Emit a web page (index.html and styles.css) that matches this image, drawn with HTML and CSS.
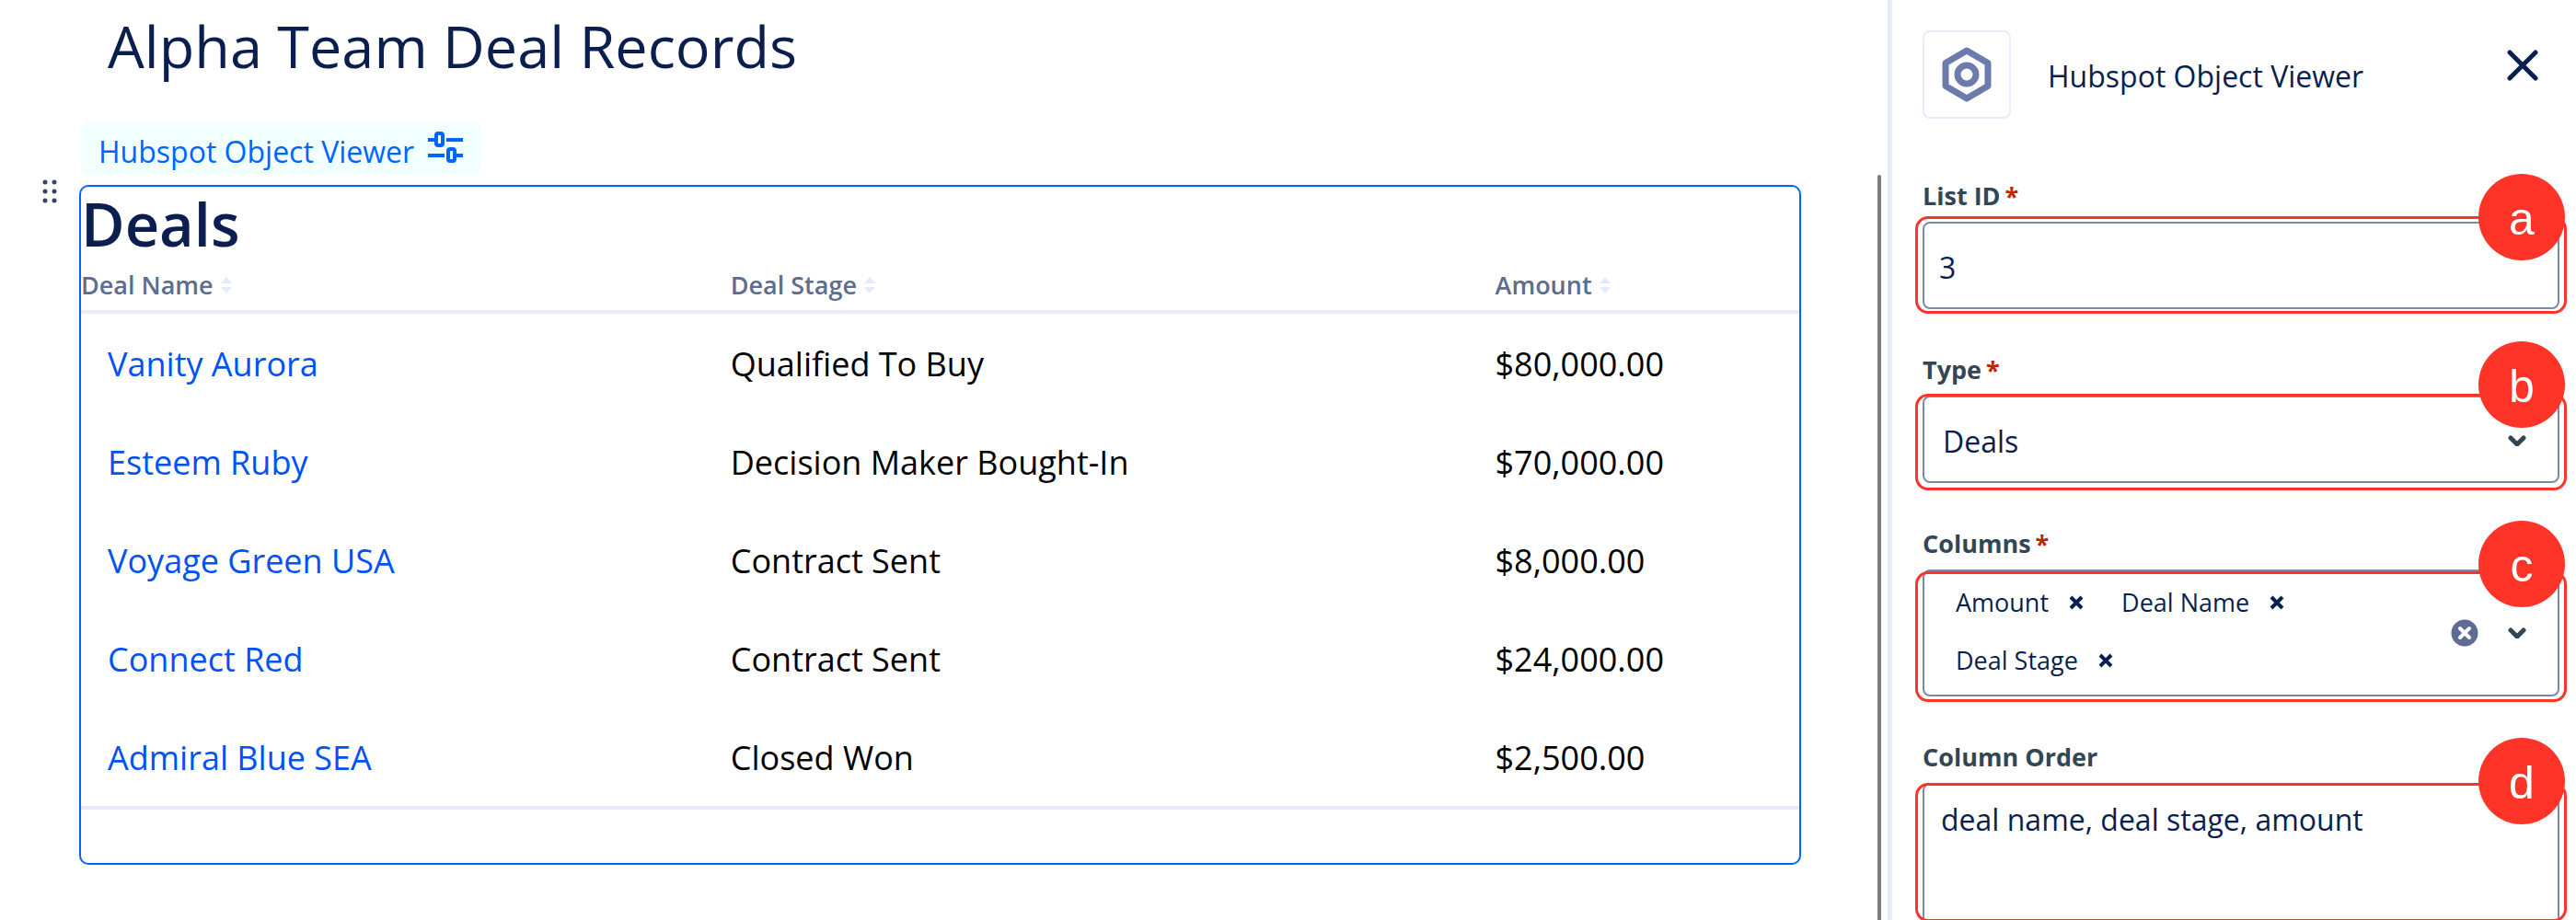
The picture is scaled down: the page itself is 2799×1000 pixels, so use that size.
FILE: index.html
```
<!DOCTYPE html>
<html lang="en">
<head>
  <meta charset="utf-8">
  <meta name="viewport" content="width=device-width, initial-scale=1">
  <title>Alpha Team Deal Records</title>
  <link rel="stylesheet" href="styles.css">
</head>
<body>
  <div class="app">
    <main class="editor">
      <h1 class="page-title">Alpha Team Deal Records</h1>

      <button class="macro-tag" type="button">
        <span>Hubspot Object Viewer</span>
        <svg class="tag-icon" viewBox="0 0 38 34" fill="none" stroke="currentColor" stroke-width="4" aria-hidden="true">
          <path d="M0 9h8M20 9h18M0 26h18M30 26h8"/>
          <rect x="9" y="2" width="7" height="13" rx="2"/>
          <rect x="22" y="19" width="7" height="13" rx="2"/>
        </svg>
      </button>

      <section class="macro">
        <svg class="drag-handle" viewBox="0 0 16 26" fill="currentColor" aria-hidden="true">
          <circle cx="3" cy="3" r="2.5"/><circle cx="13" cy="3" r="2.5"/>
          <circle cx="3" cy="13" r="2.5"/><circle cx="13" cy="13" r="2.5"/>
          <circle cx="3" cy="23" r="2.5"/><circle cx="13" cy="23" r="2.5"/>
        </svg>
        <h2 class="macro-title">Deals</h2>
        <table class="deals">
          <colgroup><col class="col-name"><col class="col-stage"><col></colgroup>
          <thead>
            <tr>
              <th scope="col"><button class="sort" type="button">Deal Name <svg class="sort-icon" viewBox="0 0 12 18" aria-hidden="true"><path d="M6 0l6 7H0zM6 18l6-7H0z"/></svg></button></th>
              <th scope="col"><button class="sort" type="button">Deal Stage <svg class="sort-icon" viewBox="0 0 12 18" aria-hidden="true"><path d="M6 0l6 7H0zM6 18l6-7H0z"/></svg></button></th>
              <th scope="col"><button class="sort" type="button">Amount <svg class="sort-icon" viewBox="0 0 12 18" aria-hidden="true"><path d="M6 0l6 7H0zM6 18l6-7H0z"/></svg></button></th>
            </tr>
          </thead>
          <tbody>
            <tr><td><a href="#">Vanity Aurora</a></td><td>Qualified To Buy</td><td>$80,000.00</td></tr>
            <tr><td><a href="#">Esteem Ruby</a></td><td>Decision Maker Bought-In</td><td>$70,000.00</td></tr>
            <tr><td><a href="#">Voyage Green USA</a></td><td>Contract Sent</td><td>$8,000.00</td></tr>
            <tr><td><a href="#">Connect Red</a></td><td>Contract Sent</td><td>$24,000.00</td></tr>
            <tr><td><a href="#">Admiral Blue SEA</a></td><td>Closed Won</td><td>$2,500.00</td></tr>
          </tbody>
        </table>
      </section>
      <div class="scroll-thumb"></div>
    </main>

    <aside class="panel">
      <header class="panel-header">
        <span class="app-icon">
          <svg viewBox="0 0 54 60" fill="none" stroke="currentColor" stroke-width="7" stroke-linejoin="round" aria-hidden="true">
            <path d="M27 4L50 17.500V42.500L27 56L4 42.500V17.500z"/>
            <circle cx="27" cy="30" r="10"/>
          </svg>
        </span>
        <span class="panel-title">Hubspot Object Viewer</span>
        <button class="close" type="button" aria-label="Close">
          <svg viewBox="0 0 34 34" fill="none" stroke="currentColor" stroke-width="5" stroke-linecap="round" aria-hidden="true"><path d="M3 3l28 28M31 3L3 31"/></svg>
        </button>
      </header>

      <form class="fields">
        <div class="field">
          <label for="list-id">List ID<span class="required">*</span></label>
          <div class="control">
            <input class="box" id="list-id" type="text" value="3">
            <span class="callout callout-a"></span><span class="badge badge-a">a</span>
          </div>
        </div>

        <div class="field">
          <label for="type">Type<span class="required">*</span></label>
          <div class="control">
            <select class="box" id="type"><option>Deals</option></select>
            <svg class="chevron chevron-over" viewBox="0 0 20 12" aria-hidden="true"><path d="M3 3l7 7 7-7"/></svg>
            <span class="callout callout-b"></span><span class="badge badge-b">b</span>
          </div>
        </div>

        <div class="field">
          <label for="columns">Columns<span class="required">*</span></label>
          <div class="control">
            <div class="box multi">
              <div class="chips">
                <span class="chip">Amount <button type="button" aria-label="Remove Amount"><svg viewBox="0 0 16 16" aria-hidden="true"><path d="M2 2l12 12M14 2L2 14"/></svg></button></span>
                <span class="chip">Deal Name <button type="button" aria-label="Remove Deal Name"><svg viewBox="0 0 16 16" aria-hidden="true"><path d="M2 2l12 12M14 2L2 14"/></svg></button></span>
                <span class="chip">Deal Stage <button type="button" aria-label="Remove Deal Stage"><svg viewBox="0 0 16 16" aria-hidden="true"><path d="M2 2l12 12M14 2L2 14"/></svg></button></span>
                <input class="chip-input" id="columns" type="text">
              </div>
              <button class="clear" type="button" aria-label="Clear all">
                <svg viewBox="0 0 30 30" aria-hidden="true"><circle cx="15" cy="15" r="14.500" fill="#5e6c94"/><path d="M10 10l10 10M20 10L10 20" stroke="#fff" stroke-width="4" stroke-linecap="round"/></svg>
              </button>
              <svg class="chevron" viewBox="0 0 20 12" aria-hidden="true"><path d="M3 3l7 7 7-7"/></svg>
            </div>
            <span class="callout callout-c"></span><span class="badge badge-c">c</span>
          </div>
        </div>

        <div class="field">
          <label for="order">Column Order</label>
          <div class="control">
            <textarea class="box" id="order">deal name, deal stage, amount</textarea>
            <span class="callout callout-d"></span><span class="badge badge-d">d</span>
          </div>
        </div>
      </form>
    </aside>
  </div>
</body>
</html>
```
FILE: styles.css
```
:root {
  --ink: #0a1f50;
  --blue: #0065ff;
  --line: #e8ebfb;
  --red: #ff3429;
}

* { box-sizing: border-box; }

body {
  margin: 0;
  background: #fff;
  color: var(--ink);
  font-family: "Open Sans", "Noto Sans", sans-serif;
  font-size: 32px;
}

button, input, select, textarea {
  margin: 0;
  border: 0;
  padding: 0;
  background: none;
  color: inherit;
  font: inherit;
}

svg { display: block; flex: none; }

.app {
  display: flex;
  height: 100vh;
  overflow: hidden;
}

/* Editor */
.editor {
  position: relative;
  flex: 1;
  min-width: 0;
  padding: 10px 94px 0 86px;
}

.page-title {
  margin: 0 0 44px;
  padding-left: 31px;
  font-size: 63px;
  font-weight: 400;
  line-height: 80px;
}

.macro-tag {
  display: flex;
  gap: 15px;
  margin: 0 0 11px 2px;
  border-radius: 8px;
  padding: 6px 20px 0 19px;
  background: #f2ffff;
  color: var(--blue);
  line-height: 50px;
}

.tag-icon {
  width: 38px;
  height: 34px;
  margin-top: 3px;
}

.macro {
  position: relative;
  border: 2px solid var(--blue);
  border-radius: 10px;
  padding-bottom: 58px;
}

.drag-handle {
  position: absolute;
  top: -8px;
  left: -42px;
  width: 16px;
  height: 26px;
  color: #344563;
}

.macro-title {
  margin: 0;
  font-size: 65px;
  font-weight: 600;
  line-height: 80px;
}

.deals {
  width: 100%;
  border-bottom: 4px solid var(--line);
  border-spacing: 0;
  table-layout: fixed;
  color: #000;
  font-size: 36px;
}

.col-name { width: 37.8%; }
.col-stage { width: 44.5%; }

.deals th {
  height: 58px;
  border-bottom: 4px solid var(--line);
  padding: 0;
  text-align: left;
}

.deals td {
  height: 107px;
  padding: 2px 0 0;
}

.deals td:first-child { padding-left: 29px; }

.deals a {
  color: #0052f5;
  text-decoration: none;
}

.sort {
  display: flex;
  align-items: center;
  gap: 8px;
  color: #5e6c8f;
  font-size: 27px;
  font-weight: 600;
  line-height: 54px;
}

.sort-icon {
  width: 12px;
  height: 18px;
  fill: #e6e9fb;
}

.scroll-thumb {
  position: absolute;
  top: 190px;
  right: 7px;
  bottom: 0;
  width: 4px;
  border-radius: 2px 2px 0 0;
  background: #7d7d7d;
}

/* Settings panel */
.panel {
  flex: 0 0 748px;
  border-left: 5px solid var(--line);
  padding: 33px 18px 0 33px;
}

.panel-header {
  display: flex;
  align-items: center;
  gap: 40px;
  margin-bottom: 64px;
}

.app-icon {
  display: grid;
  place-items: center;
  width: 96px;
  height: 96px;
  border: 2px solid var(--line);
  border-radius: 8px;
  color: #6b7bab;
}

.app-icon svg { width: 54px; height: 60px; }

.panel-title { padding-top: 3px; }

.close {
  align-self: flex-start;
  margin: 21px 23px 0 auto;
}

.close svg { width: 34px; height: 34px; }

.fields {
  display: flex;
  flex-direction: column;
  gap: 46px;
}

.field {
  display: flex;
  flex-direction: column;
  gap: 8px;
}

.field label {
  color: #344653;
  font-size: 27px;
  font-weight: 700;
  line-height: 40px;
}

.required {
  margin-left: 5px;
  color: #bf2600;
}

.control { position: relative; }

.box {
  display: block;
  width: 100%;
  min-height: 95px;
  border: 2px solid #7a8baa;
  border-radius: 8px;
  padding: 3px 16px 0;
  outline: 0;
}

select.box {
  appearance: none;
  padding: 3px 20px 0;
}

textarea.box {
  height: 180px;
  padding: 14px 18px;
  line-height: 48px;
  resize: none;
}

.chevron {
  width: 20px;
  height: 12px;
  fill: none;
  stroke: #344653;
  stroke-width: 5;
  stroke-linecap: round;
  stroke-linejoin: round;
}

.chevron-over {
  position: absolute;
  top: 43px;
  right: 36px;
  pointer-events: none;
}

.box.multi {
  display: flex;
  align-items: center;
  padding: 0 34px;
}

.chips {
  display: flex;
  flex: 1;
  flex-wrap: wrap;
  column-gap: 41px;
  padding: 2px 0 6px;
}

.chip {
  display: flex;
  align-items: center;
  gap: 22px;
  font-size: 27px;
  line-height: 63px;
}

.chip svg {
  width: 16px;
  height: 16px;
  fill: none;
  stroke: currentColor;
  stroke-width: 4;
}

.chip-input {
  width: 40px;
  outline: 0;
}

.clear { margin-right: 32px; }
.clear svg { width: 30px; height: 30px; }

/* Lettered callouts laid over the fields */
.callout {
  position: absolute;
  border: 3px solid var(--red);
  border-radius: 14px;
  pointer-events: none;
}

.callout-a { inset: -6px -8px -5px; }
.callout-b { inset: -2px -8px -8px; }
.callout-c { inset: 2px -8px -6px; }
.callout-d { inset: 0 -8px 29px; }

.badge {
  position: absolute;
  right: -6px;
  width: 94px;
  height: 94px;
  border-radius: 50%;
  background: var(--red);
  color: #fff;
  font-family: "Liberation Sans", Arial, sans-serif;
  font-size: 50px;
  line-height: 98px;
  text-align: center;
}

.badge-a { top: -52px; }
.badge-b { top: -59px; }
.badge-c { top: -53px; }
.badge-d { top: -49px; }
```
